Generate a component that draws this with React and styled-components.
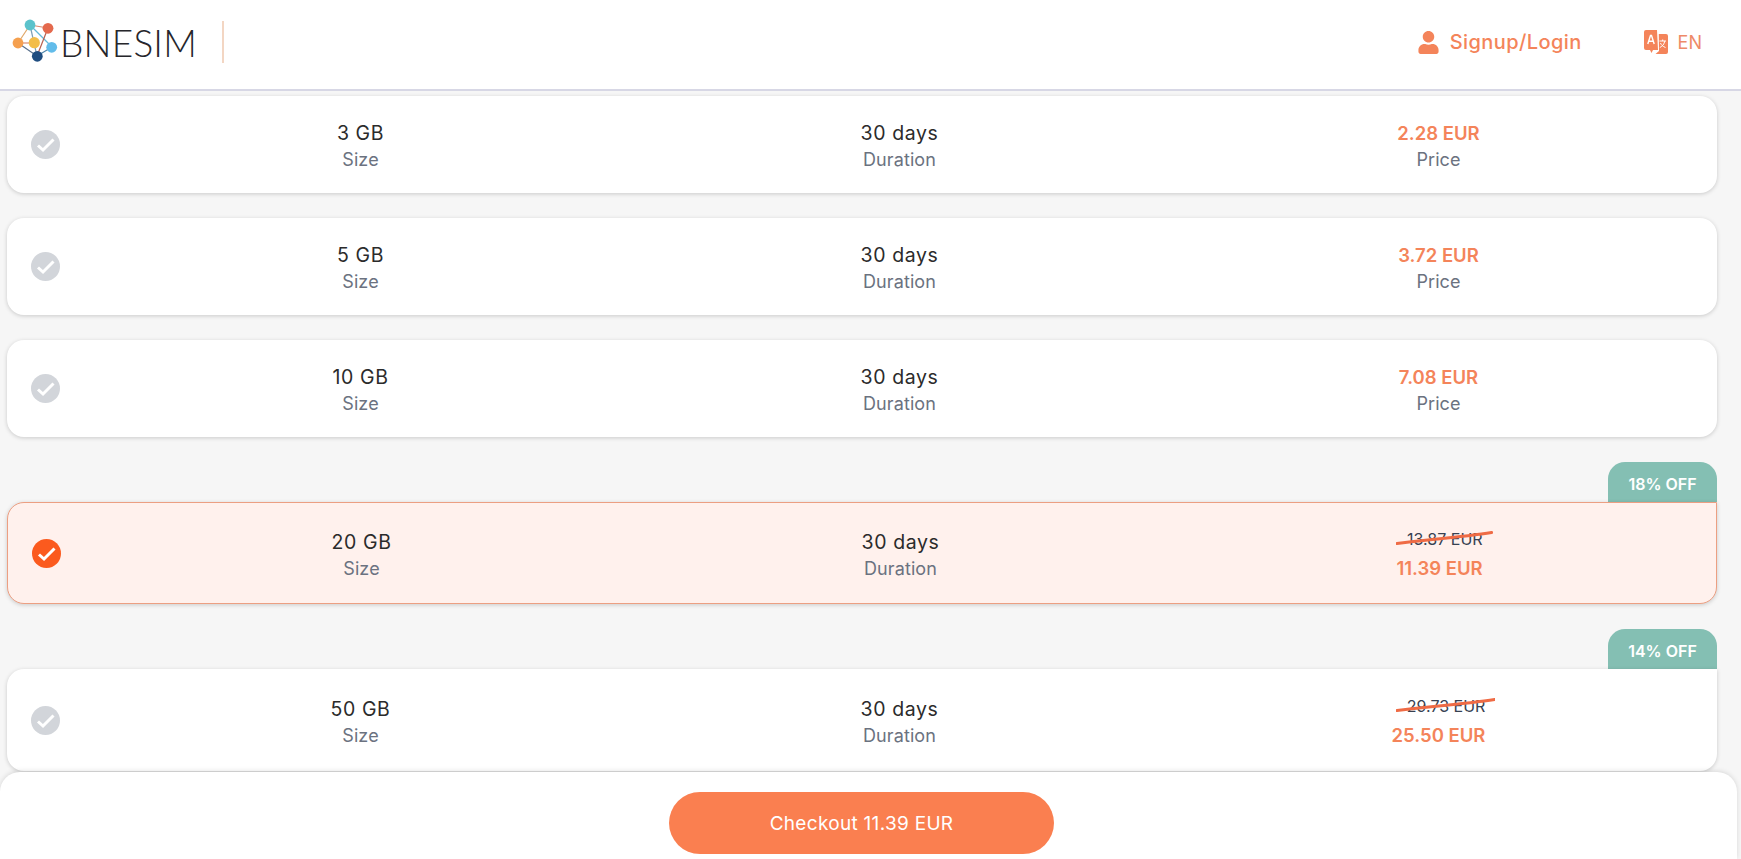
import styled, { createGlobalStyle } from "styled-components";
import { FaUser } from "react-icons/fa";

const plans = [
    { size: "3 GB", price: "2.28 EUR" },
    { size: "5 GB", price: "3.72 EUR" },
    { size: "10 GB", price: "7.08 EUR" },
    { size: "20 GB", price: "11.39 EUR", oldPrice: "13.87 EUR", off: "18% OFF", selected: true },
    { size: "50 GB", price: "25.50 EUR", oldPrice: "29.73 EUR", off: "14% OFF" },
];

const Logo = () => (
    <svg width="60" height="66" viewBox="10 10 60 66">
        <g stroke="#7f9fb5" strokeWidth="1.2">
            <line x1="30" y1="26" x2="48" y2="29" stroke="#d98a70" />
            <line x1="30" y1="26" x2="18" y2="44" stroke="#e0a86a" />
            <line x1="30" y1="26" x2="34" y2="44" />
            <line x1="30" y1="26" x2="52" y2="48" stroke="#63b8d8" />
            <line x1="48" y1="29" x2="37" y2="57" stroke="#b7604f" />
            <line x1="18" y1="44" x2="34" y2="44" stroke="#d98a70" />
            <line x1="18" y1="44" x2="37" y2="57" stroke="#58708c" />
            <line x1="34" y1="44" x2="37" y2="57" />
            <line x1="52" y1="48" x2="37" y2="57" stroke="#4f86ac" />
        </g>
        <circle cx="30" cy="26" r="5.400" fill="#5bc2cb" />
        <circle cx="48" cy="29.300" r="5.400" fill="#e4694d" />
        <circle cx="18" cy="44" r="5.400" fill="#f5a04f" />
        <circle cx="34.300" cy="43.700" r="5.600" fill="#f3bd48" />
        <circle cx="51.700" cy="48.300" r="5.400" fill="#62bcea" />
        <circle cx="37.300" cy="57.300" r="5.400" fill="#1f4d80" />
    </svg>
);

const TranslateIcon = () => (
    <svg width="24" height="24" viewBox="0 0 24 24">
        <path d="M2 0h11l1 20H9l-1.500 3-1.500-3H2a2 2 0 0 1-2-2V2a2 2 0 0 1 2-2z" fill="#f4845a" />
        <path d="M14.800 4H22a2 2 0 0 1 2 2v16a2 2 0 0 1-2 2H11.500l3.500-3z" fill="#f4845a" />
        <path d="M3.800 14L6.500 5.500h1L10.200 14M5 11.200h4" fill="none" stroke="#fff" strokeWidth="1.400" />
        <path d="M15.500 11h6.500M18.700 9.500V11M20.800 11c-.5 3-2.500 5.500-5 6.500M16.500 13c.7 2 2.400 3.500 5 4.500" fill="none" stroke="#fff" strokeWidth="1" />
    </svg>
);

const CheckIcon = ({ $on }) => (
    <CheckCircle $on={$on}>
        <svg width="29" height="29" viewBox="0 0 29 29">
            <path d="M7 15.500l5 4.500 10.500-10.500" fill="none" stroke="#fff" strokeWidth="3" />
        </svg>
    </CheckCircle>
);

const Scratch = () => (
    <ScratchLine viewBox="0 0 100 14" preserveAspectRatio="none">
        <path d="M1 12.500C30 9 70 6 99 1.500" fill="none" stroke="#ef6b45" strokeWidth="3" strokeLinecap="round" vectorEffect="non-scaling-stroke" />
    </ScratchLine>
);

const App = () => {
    return (
        <Page>
            <GlobalStyle />
            <Header>
                <Brand>
                    <Logo />
                    <BrandName>BNESIM</BrandName>
                    <BrandDivider />
                </Brand>
                <Actions>
                    <SignLink>
                        <FaUser size={23} />
                        Signup/Login
                    </SignLink>
                    <LangLink>
                        <TranslateIcon />
                        EN
                    </LangLink>
                </Actions>
            </Header>
            <List>
                {plans.map((plan) => (
                    <Item key={plan.size}>
                        {plan.off && <OffBadge>{plan.off}</OffBadge>}
                        <Card $selected={plan.selected} $tall={plan.off}>
                            <CheckCell>
                                <CheckIcon $on={plan.selected} />
                            </CheckCell>
                            <Cell $tall={plan.off}>
                                <Value>{plan.size}</Value>
                                <Label>Size</Label>
                            </Cell>
                            <Cell $tall={plan.off}>
                                <Value>30 days</Value>
                                <Label>Duration</Label>
                            </Cell>
                            {plan.oldPrice ? (
                                <Cell $tall={plan.off}>
                                    <PriceStack>
                                        <OldPrice>
                                            {plan.oldPrice}
                                            <Scratch />
                                        </OldPrice>
                                        <Price>{plan.price}</Price>
                                    </PriceStack>
                                </Cell>
                            ) : (
                                <Cell>
                                    <Price>{plan.price}</Price>
                                    <Label>Price</Label>
                                </Cell>
                            )}
                        </Card>
                    </Item>
                ))}
            </List>
            <Footer>
                <CheckoutBtn>Checkout 11.39 EUR</CheckoutBtn>
            </Footer>
        </Page>
    );
};

const GlobalStyle = createGlobalStyle`
    html, body {
        margin: 0;
        height: 100%;
        overflow: hidden;
        background-color: #f6f6f6;
    }
    * {
        box-sizing: border-box;
    }
`;
const Page = styled.div`
    display: flex;
    flex-direction: column;
    height: 859px;
    overflow: hidden;
    background-color: #f6f6f6;
    font-family: Inter, "Open Sans", sans-serif;
    color: #2b2b2b;
`;
const Header = styled.header`
    display: flex;
    justify-content: space-between;
    align-items: center;
    flex-shrink: 0;
    height: 91px;
    padding: 0 39px 5px 10px;
    background-color: #fff;
    border-bottom: 2px solid #d7d7e5;
`;
const Brand = styled.div`
    display: flex;
    align-items: center;
    height: 100%;
`;
const BrandName = styled.span`
    margin-left: -10px;
    font-family: Lato, sans-serif;
    font-size: 37px;
    font-weight: 300;
    letter-spacing: 0.2px;
    color: #26262b;
`;
const BrandDivider = styled.span`
    width: 2px;
    height: 42px;
    margin-left: 25px;
    background-color: #f3d6c3;
`;
const Actions = styled.div`
    display: flex;
    align-items: center;
    gap: 62px;
`;
const SignLink = styled.a`
    display: flex;
    align-items: center;
    gap: 10px;
    font-size: 20px;
    font-weight: 500;
    letter-spacing: 0.4px;
    color: #f4845a;
`;
const LangLink = styled.a`
    display: flex;
    align-items: center;
    gap: 10px;
    font-size: 18px;
    color: #ee8a68;
`;
const List = styled.main`
    display: flex;
    flex-direction: column;
    flex: 1;
    gap: 25px;
    padding: 5px 24px 0 7px;
`;
const Item = styled.div`
    display: flex;
    flex-direction: column;
    align-items: flex-end;
`;
const OffBadge = styled.div`
    display: flex;
    align-items: center;
    justify-content: center;
    width: 109px;
    height: 40px;
    padding-top: 3px;
    border-radius: 17px 17px 0 0;
    background-color: #84bfb3;
    color: #fff;
    font-size: 16px;
    font-weight: 600;
`;
const Card = styled.section`
    display: grid;
    grid-template-columns: 84px repeat(3, 539px);
    align-items: center;
    width: 100%;
    height: ${(props) => (props.$tall ? "102px" : "97px")};
    background-color: ${(props) => (props.$selected ? "#fff1ed" : "#fff")};
    border: ${(props) => (props.$selected ? "1px solid #ec9f82" : "none")};
    border-radius: 17px;
    border-top-right-radius: ${(props) => (props.$tall ? "0" : "17px")};
    box-shadow: 0 1px 4px rgba(0, 0, 0, 0.18);
`;
const CheckCell = styled.div`
    padding-left: 24px;
`;
const CheckCircle = styled.span`
    display: block;
    width: 29px;
    height: 29px;
    border-radius: 50%;
    background-color: ${(props) => (props.$on ? "#fb5a1e" : "#d2d5da")};
`;
const Cell = styled.div`
    display: flex;
    flex-direction: column;
    align-items: center;
    gap: 2px;
    padding-top: ${(props) => (props.$tall ? "4px" : "2px")};
`;
const Value = styled.div`
    font-size: 19.5px;
    line-height: 26px;
    letter-spacing: 0.6px;
`;
const Label = styled.div`
    font-size: 18px;
    line-height: 24px;
    letter-spacing: 0.1px;
    color: #6b7280;
`;
const Price = styled.div`
    font-size: 18.5px;
    line-height: 26px;
    font-weight: 600;
    color: #f4845a;
`;
const PriceStack = styled.div`
    display: flex;
    flex-direction: column;
    align-items: flex-end;
    gap: 4px;
    margin-top: -2px;
`;
const OldPrice = styled.div`
    position: relative;
    font-size: 16px;
    line-height: 24px;
    color: #374151;
`;
const ScratchLine = styled.svg`
    position: absolute;
    left: -11px;
    right: -10px;
    top: 4px;
    width: calc(100% + 21px);
    height: 14px;
`;
const Footer = styled.footer`
    display: flex;
    justify-content: center;
    flex-shrink: 0;
    height: 87px;
    margin: 1px 4px 0 0;
    padding: 20px 14px 0 0;
    background-color: #fff;
    border-radius: 20px 20px 0 0;
    box-shadow: 0 -1px 5px rgba(0, 0, 0, 0.12);
`;
const CheckoutBtn = styled.button`
    width: 385px;
    height: 62px;
    border: none;
    border-radius: 31px;
    background-color: #fa7f50;
    color: #fff;
    font-family: inherit;
    font-size: 19px;
    letter-spacing: 0.3px;
`;

export default App;
